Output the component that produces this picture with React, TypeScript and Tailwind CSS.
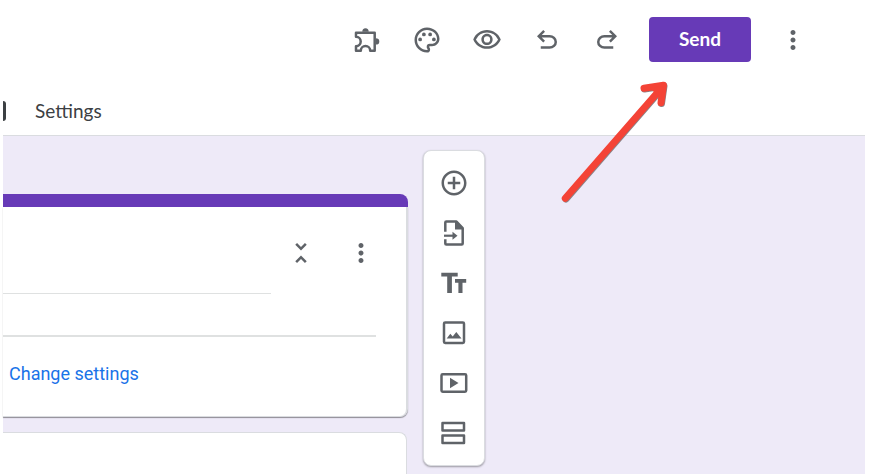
import type { ReactNode } from 'react';
import {
  MdAddCircleOutline,
  MdMoreVert,
  MdOutlinePalette,
  MdOutlineVisibility,
  MdUnfoldLess,
} from 'react-icons/md';

function Svg({ children }: { children: ReactNode }) {
  return (
    <svg viewBox="0 0 30 30" className="w-[30px] h-[30px]" fill="none" stroke="currentColor" strokeWidth={2.5} strokeLinejoin="round">
      {children}
    </svg>
  );
}

const AddonsIcon = () => (
  <Svg>
    <path d="M4 7.8H22.7V25.7H18.2a4.7 4.7 0 0 0-9.4 0H4V21.2a4.7 4.7 0 0 0 0-9.4z" />
    <path d="M10.3 6.8a3.2 3.6 0 0 1 6.4 0zM23.7 13.2a3.6 3.2 0 0 1 0 6.4z" fill="currentColor" stroke="none" />
  </Svg>
);

const undoPath =
  'M7 19v-2h7.1q1.575 0 2.738-1T18 13.5 16.838 11 14.1 10H7.8l2.6 2.6L9 14 4 9l5-5 1.4 1.4L7.8 8h6.3q2.425 0 4.163 1.575T20 13.5q0 2.35-1.737 3.925T14.1 19z';

const UndoIcon = () => (
  <svg viewBox="0 0 24 24" className="w-[30px] h-[30px]" fill="currentColor">
    <path d={undoPath} />
  </svg>
);

const RedoIcon = () => (
  <svg viewBox="0 0 24 24" className="w-[30px] h-[30px]" fill="currentColor">
    <path d={undoPath} transform="matrix(-1 0 0 1 24 0)" />
  </svg>
);

const ImportIcon = () => (
  <Svg>
    <path d="M6.3 13.7V4.6q0-1 1-1H17.5L23.7 10V25.4q0 1-1 1H7.3q-1 0-1-1V21.2" />
    <path d="M16 2.8L24.8 11.4H16z" fill="currentColor" stroke="none" />
    <path d="M5 17.7H15" strokeWidth={2.2} />
    <path d="M13.5 13.7L18.5 17.7L13.5 21.7z" fill="currentColor" stroke="none" />
  </Svg>
);

const TitleIcon = () => (
  <Svg>
    <path d="M2.3 4.8H18.7V8.6H12.9V25H8.2V8.6H2.3zM16 11H27.2V14.8H23.5V25H19.4V14.8H16z" fill="currentColor" stroke="none" />
  </Svg>
);

const ImageIcon = () => (
  <Svg>
    <rect x="5" y="4.5" width="20" height="20.5" rx="1.2" />
    <path d="M7.7 20.5L11.3 15.7L13.7 18.5L17.3 14L22.5 20.5z" fill="currentColor" stroke="none" />
  </Svg>
);

const VideoIcon = () => (
  <Svg>
    <rect x="2.5" y="6.2" width="24.7" height="17.6" rx="1.2" />
    <path d="M11 9.8L19.5 15L11 20.2z" fill="currentColor" stroke="none" />
  </Svg>
);

const SectionIcon = () => (
  <Svg>
    <rect x="3.5" y="4.9" width="21.5" height="7.5" />
    <rect x="3.5" y="17.6" width="21.5" height="7.5" />
  </Svg>
);

const headerActions = [
  { label: 'Add-ons', icon: <AddonsIcon /> },
  { label: 'Customize theme', icon: <MdOutlinePalette size={30} /> },
  { label: 'Preview', icon: <MdOutlineVisibility size={30} /> },
  { label: 'Undo', icon: <UndoIcon /> },
  { label: 'Redo', icon: <RedoIcon /> },
];

const tools = [
  { label: 'Add question', icon: <MdAddCircleOutline size={30} /> },
  { label: 'Import questions', icon: <ImportIcon /> },
  { label: 'Add title and description', icon: <TitleIcon /> },
  { label: 'Add image', icon: <ImageIcon /> },
  { label: 'Add video', icon: <VideoIcon /> },
  { label: 'Add section', icon: <SectionIcon /> },
];

function IconButton({ label, children }: { label: string; children: ReactNode }) {
  return (
    <button type="button" aria-label={label} className="flex h-[60px] w-[60px] shrink-0 items-center justify-center">
      {children}
    </button>
  );
}

export default function App() {
  return (
    <div className="relative flex h-screen flex-col overflow-hidden bg-white pl-[3px] pr-1 font-['Roboto',sans-serif] text-[#5f6368]">
      <header className="shrink-0 border-b border-[#dadce0]">
        <div className="flex h-[79px] items-center justify-end pr-[42px]">
          {headerActions.map((action) => (
            <IconButton key={action.label} label={action.label}>
              {action.icon}
            </IconButton>
          ))}
          <button type="button" className="ml-3 mr-3 h-[45px] w-[102px] rounded bg-[#673ab7] pb-[2px] font-['Lato',sans-serif] text-[19px] leading-6 font-bold text-white">
            Send
          </button>
          <IconButton label="More">
            <MdMoreVert size={30} />
          </IconButton>
        </div>
        <nav className="flex h-14 items-center pt-2">
          <span className="h-5 w-[3px] rounded-r-full bg-[#3c4043]" />
          <a href="#settings" className="ml-[29px] font-['Lato',sans-serif] text-[19px] leading-6 text-[#3c4043]">
            Settings
          </a>
        </nav>
      </header>

      <main className="flex flex-1 items-start bg-[#eeeaf8]">
        <div className="flex w-[47%] flex-col self-stretch pt-[58px]">
          <div className="h-[13px] shrink-0 rounded-tr-lg bg-[#673ab7]" />
          <section className="shrink-0 rounded-br-lg border-b border-r-2 border-[#dadce0] bg-white pb-[30px] shadow-[0_1px_1px_rgba(0,0,0,0.4)]">
            <div className="flex items-start pr-[15px] pt-4">
              <input type="text" aria-label="Form title" className="h-[71px] min-w-0 flex-1 border-b border-[#dfe1e1] outline-none" />
              <IconButton label="Collapse">
                <MdUnfoldLess size={30} />
              </IconButton>
              <IconButton label="More options">
                <MdMoreVert size={30} />
              </IconButton>
            </div>
            <div className="pr-[30px]">
              <input type="text" aria-label="Form description" className="block h-[43px] w-full border-b-2 border-[#dfe1e1] outline-none" />
            </div>
            <a href="#change" className="ml-[6px] mt-[25px] block text-lg leading-6 text-[#1a73e8]">
              Change settings
            </a>
          </section>
          <section className="mr-px mt-[15px] flex-1 rounded-tr-lg border-r border-t border-[#dadce0] bg-white" />
        </div>

        <div className="ml-[15px] mt-[14px] flex w-[62px] flex-col items-center rounded-lg border border-[#dadce0] bg-white py-[7px] shadow-[0_1px_2px_rgba(0,0,0,0.35)]">
          {tools.map((tool) => (
            <button key={tool.label} type="button" aria-label={tool.label} className="flex h-[50px] w-full items-center justify-center">
              {tool.icon}
            </button>
          ))}
        </div>
      </main>

      {/* arrow pointing at Send */}
      <svg viewBox="0 0 120 130" className="pointer-events-none absolute right-[189px] top-[76px] h-[130px] w-[120px]" fill="none" strokeWidth={7} strokeLinecap="round" strokeLinejoin="round">
        <path d="M6 123L103.5 11M84.5 13L104 10L101.5 27.5" stroke="#8a8388" />
        <path d="M5.3 122.3L103 10.3M84 12.3L103.5 9.3L101 26.8" stroke="#f44336" />
        <path d="M90 12L103 10L101 23z" fill="#f44336" />
      </svg>
    </div>
  );
}
